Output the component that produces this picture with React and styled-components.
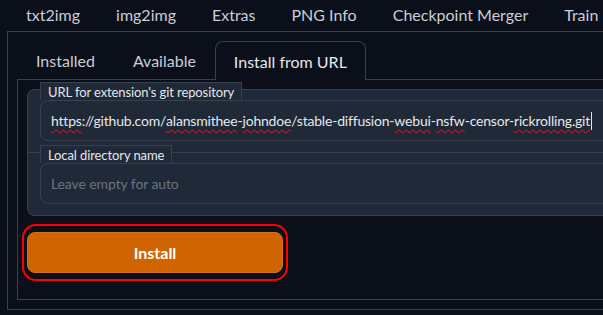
import React from "react";
import styled, { createGlobalStyle } from "styled-components";

const COLORS = {
  page: "#0b0f19",
  line: "#374151",
  block: "#1f2937",
  text: "#c9ced6",
  strong: "#e5e7eb",
  muted: "#6b7280",
  orange: "#cf6400",
};

const TOP_TABS = ["txt2img", "img2img", "Extras", "PNG Info", "Checkpoint Merger", "Train"];
const SUB_TABS = ["Installed", "Available", "Install from URL"];

const URL_PARTS = [
  { text: "https", typo: true },
  { text: "://github.com/" },
  { text: "alansmithee", typo: true },
  { text: "-" },
  { text: "johndoe", typo: true },
  { text: "/stable-diffusion-" },
  { text: "webui", typo: true },
  { text: "-" },
  { text: "nsfw", typo: true },
  { text: "-censor-" },
  { text: "rickrolling.git", typo: true },
];

const GlobalStyle = createGlobalStyle`
  body {
    margin: 0;
    background: ${COLORS.page};
    overflow: hidden;
    font-family: Lato, "Open Sans", sans-serif;
  }
`;

const App = () => {
  return (
    <>
      <GlobalStyle />
      <Page>
        <TopNav>
          {TOP_TABS.map((tab) => (
            <TopTab key={tab}>{tab}</TopTab>
          ))}
        </TopNav>
        <OuterPanel>
          <SubNav>
            {SUB_TABS.map((tab, i) => (
              <SubTab key={tab} $selected={i === 2}>
                {tab}
              </SubTab>
            ))}
          </SubNav>
          <InnerPanel>
            <Form>
              <Field>
                <FieldLabel>URL for extension's git repository</FieldLabel>
                <TextBox>
                  {URL_PARTS.map((part, i) =>
                    part.typo ? <Typo key={i}>{part.text}</Typo> : <span key={i}>{part.text}</span>
                  )}
                  <Caret />
                </TextBox>
              </Field>
              <Field $divided>
                <FieldLabel>Local directory name</FieldLabel>
                <TextInput placeholder="Leave empty for auto" readOnly />
              </Field>
            </Form>
            <Highlight>
              <InstallButton>Install</InstallButton>
            </Highlight>
          </InnerPanel>
        </OuterPanel>
      </Page>
    </>
  );
};

const Page = styled.div`
  width: 720px;
  padding-left: 7px;
`;

const TopNav = styled.div`
  display: flex;
  height: 31px;
  align-items: center;
  padding: 0 0 2px 1px;
  box-sizing: border-box;
`;

const TopTab = styled.div`
  padding: 0 18px;
  font-size: 16px;
  color: ${COLORS.text};
`;

const OuterPanel = styled.div`
  box-sizing: border-box;
  height: 279px;
  border: 1px solid ${COLORS.line};
  border-right: none;
  padding: 9px 0 9px 9px;
  display: flex;
  flex-direction: column;
`;

const SubNav = styled.div`
  display: flex;
  height: 38px;
`;

const SubTab = styled.div`
  box-sizing: border-box;
  height: ${(p) => (p.$selected ? "39px" : "38px")};
  display: flex;
  align-items: center;
  padding: 0 18px;
  font-size: 16px;
  color: ${(p) => (p.$selected ? COLORS.strong : COLORS.text)};
  border: 1px solid ${(p) => (p.$selected ? COLORS.line : "transparent")};
  border-bottom: none;
  border-radius: 8px 8px 0 0;
  background: ${COLORS.page};
  position: relative;
  z-index: 1;
`;

const InnerPanel = styled.div`
  box-sizing: border-box;
  height: 221px;
  border: 1px solid ${COLORS.line};
  border-right: none;
  padding: 9px 0 0 9px;
`;

const Form = styled.div`
  display: flex;
  flex-direction: column;
  background: ${COLORS.block};
  border: 1px solid ${COLORS.line};
  border-right: none;
  border-radius: 8px 0 0 8px;
`;

const Field = styled.div`
  display: flex;
  flex-direction: column;
  align-items: flex-start;
  padding: 0 0 11px 12px;
  border-top: ${(p) => (p.$divided ? `1px solid ${COLORS.line}` : "none")};
`;

const FieldLabel = styled.span`
  box-sizing: border-box;
  height: 18px;
  margin-top: -8px;
  padding: 0 7px;
  display: flex;
  align-items: center;
  font-size: 13px;
  letter-spacing: -0.1px;
  color: ${COLORS.strong};
  background: ${COLORS.block};
  border: 1px solid ${COLORS.line};
  border-bottom: none;
`;

const TextBox = styled.div`
  box-sizing: border-box;
  width: 640px;
  height: 41px;
  display: flex;
  align-items: center;
  padding: 0 10px;
  font-size: 14px;
  letter-spacing: -0.2px;
  color: ${COLORS.strong};
  border: 1px solid ${COLORS.line};
  border-radius: 8px;
  white-space: nowrap;
`;

const Typo = styled.span`
  text-decoration: underline wavy #e0202a 1px;
  text-underline-offset: 3px;
`;

const Caret = styled.span`
  width: 1px;
  height: 18px;
  margin-left: 1px;
  background: ${COLORS.strong};
`;

const TextInput = styled.input`
  box-sizing: border-box;
  width: 640px;
  height: 41px;
  padding: 0 10px;
  font-family: inherit;
  font-size: 14px;
  letter-spacing: -0.1px;
  color: ${COLORS.strong};
  background: transparent;
  border: 1px solid ${COLORS.line};
  border-radius: 8px;
  outline: none;

  &::placeholder {
    color: ${COLORS.muted};
  }
`;

const Highlight = styled.div`
  align-self: flex-start;
  display: inline-flex;
  margin: 8px 0 0 -5px;
  padding: 6px 3px;
  border: 2px solid #ff0000;
  border-radius: 14px;
`;

const InstallButton = styled.button`
  width: 256px;
  height: 41px;
  font-family: inherit;
  font-size: 16px;
  font-weight: 700;
  color: #ffffff;
  background: ${COLORS.orange};
  border: 1px solid #d9731a;
  border-radius: 8px;
`;

export default App;
